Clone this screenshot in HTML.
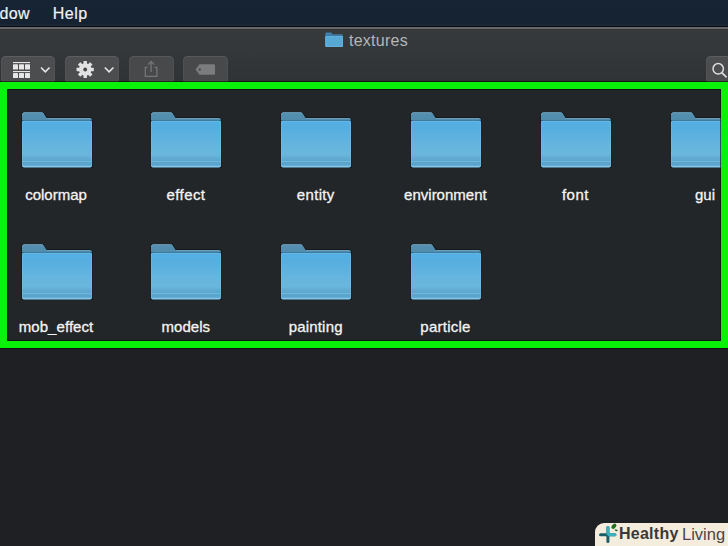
<!DOCTYPE html>
<html><head><meta charset="utf-8">
<style>
*{margin:0;padding:0;box-sizing:border-box}
html,body{width:728px;height:546px;overflow:hidden;background:#1e2023;font-family:"Liberation Sans",sans-serif}
.abs{position:absolute}
#menubar{position:absolute;left:0;top:0;width:728px;height:26px;background:linear-gradient(#172434 0,#152231 24px,#1e2937 25px,#1e2937 26px)}
#menubar span{position:absolute;top:3.7px;letter-spacing:0.45px;font-size:16px;color:#eef1f4;line-height:20px;-webkit-text-stroke:0.2px #eef1f4}
#sep1{position:absolute;left:0;top:26px;width:728px;height:1px;background:#06080c}
#sep{position:absolute;left:0;top:27px;width:728px;height:2px;background:#66696b}
#toolbar{position:absolute;left:0;top:29px;width:728px;height:53px;background:linear-gradient(#2c2e2f 0,#37393b 1.5px,#36393b 10px,#303335 52px,#29282d 53px)}
#title{position:absolute;left:349px;top:31px;letter-spacing:0.25px;font-size:16px;color:#b4b6b8;line-height:20px}
.btn{position:absolute;top:56px;height:28px;border-radius:5px;background:#4b4d4f;box-shadow:inset 0 0 0 1px rgba(255,255,255,0.04),inset 0 1px 0 #55575a}
.btn.dim{background:#47494b;box-shadow:inset 0 0 0 1px rgba(255,255,255,0.04),inset 0 1px 0 #505254}
#green{position:absolute;left:0;top:82px;width:728px;height:266px;border:7px solid #0af20a;z-index:5;box-shadow:0 0 0 1px rgba(5,10,5,0.55),inset 0 0 0 1px rgba(5,10,5,0.6)}
#content{position:absolute;left:0;top:82px;width:728px;height:266px;background:#232629}
.item{position:absolute;width:130px;height:100px}
.item svg{position:absolute;left:29.6px;top:0.5px;overflow:visible}
.item .lbl{position:absolute;left:0;width:130px;top:75px;font-size:15px;color:#f4f4f4;line-height:18px;text-align:center;-webkit-text-stroke:0.3px #f4f4f4}
#logo{position:absolute;left:595.4px;top:523px;width:140px;height:30px;background:#f4ecdc;border-radius:9px 0 0 0}
</style></head><body>
<div id="menubar">
  <span style="left:-0.6px">dow</span>
  <span style="left:52.8px">Help</span>
</div>
<div id="sep1"></div>
<div id="sep"></div>
<div id="toolbar"></div>
<svg class="abs" style="left:325px;top:32px" width="19" height="16" viewBox="0 0 19 16">
  <path d="M0.3 1.8Q0.3 0.6 1.5 0.6H6.2L7.6 2.2H16.8Q18 2.2 18 3.4V14Q18 15 17 15H1.3Q0.3 15 0.3 14Z" fill="#3f7fa8"/>
  <rect x="0.3" y="3.2" width="17.7" height="0.7" fill="#2a5575"/>
  <rect x="0.3" y="3.8" width="17.7" height="11.2" rx="1" fill="#58a8d6"/>
  <rect x="0.8" y="4.3" width="16.7" height="10.2" rx="0.8" fill="none" stroke="#7cc0e4" stroke-opacity="0.5" stroke-width="0.8"/>
</svg>
<div id="title">textures</div>
<div class="btn" style="left:1px;width:54px"></div>
<div class="btn" style="left:65px;width:54px"></div>
<div class="btn dim" style="left:129px;width:45px"></div>
<div class="btn dim" style="left:183px;width:45px"></div>
<div class="btn" style="left:706px;width:30px"></div>
<!-- grid icon -->
<svg class="abs" style="left:0;top:52px" width="728" height="34" viewBox="0 52 728 34">
  <g fill="#e6e6e6">
    <rect x="13" y="62" width="17" height="1.1"/>
    <rect x="13" y="64.3" width="5" height="5.3" rx="0.6"/>
    <rect x="19" y="64.3" width="5" height="5.3" rx="0.6"/>
    <rect x="25" y="64.3" width="5" height="5.3" rx="0.6"/>
    <rect x="13" y="71" width="17" height="1.1"/>
    <rect x="13" y="73" width="5" height="5.1" rx="0.6"/>
    <rect x="19" y="73" width="5" height="5.1" rx="0.6"/>
    <rect x="25" y="73" width="5" height="5.1" rx="0.6"/>
  </g>
  <path d="M41 67.5L45.3 71.8L49.6 67.5" fill="none" stroke="#e6e6e6" stroke-width="1.6"/>
  <path d="M104.8 67.5L109.1 71.8L113.4 67.5" fill="none" stroke="#e6e6e6" stroke-width="1.6"/>
  <g fill="#e2e2e2"><rect x="83.5" y="60.9" width="3.4" height="4" rx="0.4" transform="rotate(0 85.2 69.5)"/><rect x="83.5" y="60.9" width="3.4" height="4" rx="0.4" transform="rotate(45 85.2 69.5)"/><rect x="83.5" y="60.9" width="3.4" height="4" rx="0.4" transform="rotate(90 85.2 69.5)"/><rect x="83.5" y="60.9" width="3.4" height="4" rx="0.4" transform="rotate(135 85.2 69.5)"/><rect x="83.5" y="60.9" width="3.4" height="4" rx="0.4" transform="rotate(180 85.2 69.5)"/><rect x="83.5" y="60.9" width="3.4" height="4" rx="0.4" transform="rotate(225 85.2 69.5)"/><rect x="83.5" y="60.9" width="3.4" height="4" rx="0.4" transform="rotate(270 85.2 69.5)"/><rect x="83.5" y="60.9" width="3.4" height="4" rx="0.4" transform="rotate(315 85.2 69.5)"/><circle cx="85.2" cy="69.5" r="6.2"/></g><circle cx="85.2" cy="69.5" r="1.9" fill="#45474a"/>
  <!-- share -->
  <g fill="none" stroke="#747678" stroke-width="1.3">
    <path d="M147.5 67.3H145.3V76.4H156.9V67.3H154.5"/>
    <path d="M151.1 72V61.5M148 64.6L151.1 61.5L154.2 64.6"/>
  </g>
  <!-- tag -->
  <path d="M195.5 69.5L199.5 64.3H214Q215 64.3 215 65.3V73.7Q215 74.7 214 74.7H199.5Z" fill="#7a7c7e"/>
  <circle cx="199.8" cy="69.5" r="1.2" fill="#4a4c4e"/>
  <!-- search -->
  <circle cx="718.2" cy="68.8" r="5.2" fill="none" stroke="#dcdcdc" stroke-width="1.5"/>
  <path d="M721.8 72.6L726.6 77.4" stroke="#dcdcdc" stroke-width="1.7"/>
</svg>
<div id="green"></div>
<div id="content"></div>
<svg width="0" height="0" style="position:absolute">
<defs>
<linearGradient id="fg" x1="0" y1="0" x2="0" y2="1">
<stop offset="0" stop-color="#56b0e4"/>
<stop offset="0.15" stop-color="#55aee0"/>
<stop offset="0.55" stop-color="#66b5de"/>
<stop offset="0.72" stop-color="#6ab6dc"/>
<stop offset="0.815" stop-color="#60a9d1"/>
<stop offset="0.865" stop-color="#5ca6cf"/>
<stop offset="0.875" stop-color="#72bbe0"/>
<stop offset="0.895" stop-color="#5ba5cd"/>
<stop offset="0.955" stop-color="#5aa3cb"/>
<stop offset="0.97" stop-color="#84c6e7"/>
<stop offset="0.99" stop-color="#84c6e7"/>
<stop offset="1" stop-color="#6fb6dc"/>
</linearGradient>
<linearGradient id="tg" x1="0" y1="0" x2="0" y2="1">
<stop offset="0" stop-color="#5590b0"/>
<stop offset="1" stop-color="#4a86a6"/>
</linearGradient>
<symbol id="folder" viewBox="0 0 72 57">
<path d="M0.3 2.8Q0.3 -0.4 3.3 -0.4H20.8Q22.2 -0.4 23.1 0.7L26 5.3H69Q71.7 5.3 71.7 8V56.1H0.3Z" fill="#14171a"/>
<path d="M1 2.8Q1 0.3 3.3 0.3H20.5Q21.8 0.3 22.6 1.3L25.6 6H69Q71 6 71 8V20H1Z" fill="url(#tg)"/>
<path d="M1.4 2.8Q1.4 0.7 3.3 0.7H20.5Q21.6 0.7 22.3 1.6" fill="none" stroke="#86b6d2" stroke-width="0.7" stroke-opacity="0.8"/>
<rect x="25.8" y="6" width="43.5" height="0.8" fill="#78aac6" fill-opacity="0.8"/>
<rect x="1" y="8" width="70" height="1" fill="#2b5f7f"/>
<rect x="1" y="8.8" width="70" height="46.6" rx="2" fill="url(#fg)"/>
<rect x="1.4" y="9.2" width="69.2" height="45.8" rx="1.6" fill="none" stroke="#86c8ec" stroke-opacity="0.45" stroke-width="0.8"/>
</symbol>
</defs></svg>
<div id="items">
<div class="item" style="left:-9.0px;top:111px"><svg width="72" height="57"><use href="#folder"/></svg><div class="lbl" style="letter-spacing:0px;padding-left:0px">colormap</div></div>
<div class="item" style="left:120.8px;top:111px"><svg width="72" height="57"><use href="#folder"/></svg><div class="lbl" style="letter-spacing:0.4px;padding-left:0.4px">effect</div></div>
<div class="item" style="left:250.6px;top:111px"><svg width="72" height="57"><use href="#folder"/></svg><div class="lbl" style="letter-spacing:0.32px;padding-left:0.32px">entity</div></div>
<div class="item" style="left:380.4px;top:111px"><svg width="72" height="57"><use href="#folder"/></svg><div class="lbl" style="letter-spacing:0px;padding-left:0px">environment</div></div>
<div class="item" style="left:510.2px;top:111px"><svg width="72" height="57"><use href="#folder"/></svg><div class="lbl" style="letter-spacing:0.43px;padding-left:0.43px">font</div></div>
<div class="item" style="left:640.0px;top:111px"><svg width="72" height="57"><use href="#folder"/></svg><div class="lbl" style="letter-spacing:0.1px;padding-left:0.1px">gui</div></div>
<div class="item" style="left:-9.0px;top:243px"><svg width="72" height="57"><use href="#folder"/></svg><div class="lbl" style="letter-spacing:0.07px;padding-left:0.07px">mob_effect</div></div>
<div class="item" style="left:120.8px;top:243px"><svg width="72" height="57"><use href="#folder"/></svg><div class="lbl" style="letter-spacing:0px;padding-left:0px">models</div></div>
<div class="item" style="left:250.6px;top:243px"><svg width="72" height="57"><use href="#folder"/></svg><div class="lbl" style="letter-spacing:0.19px;padding-left:0.19px">painting</div></div>
<div class="item" style="left:380.4px;top:243px"><svg width="72" height="57"><use href="#folder"/></svg><div class="lbl" style="letter-spacing:0.24px;padding-left:0.24px">particle</div></div>
</div>
<div id="logo"></div>
<svg class="abs" style="left:595px;top:515px" width="40" height="31" viewBox="595 515 40 31">
  <rect x="606.4" y="526" width="3" height="17" rx="1.5" fill="#1b5c68"/>
  <rect x="599" y="533.2" width="17.4" height="3" rx="1.5" fill="#1b5c68"/>
  <rect x="606.4" y="526" width="3" height="9" rx="1.5" fill="#3ab3c0"/>
  <rect x="607.5" y="533.2" width="8.9" height="3" rx="1.5" fill="#3ab3c0"/>
  <ellipse cx="613.9" cy="526.3" rx="1.9" ry="3" transform="rotate(40 613.9 526.3)" fill="#217020"/>
  <ellipse cx="616.2" cy="530.2" rx="1.6" ry="0.8" transform="rotate(20 616.2 530.2)" fill="#217020"/>
</svg>
<div class="abs" style="left:619px;top:524px;font-size:16px;font-weight:bold;color:#3b3937;letter-spacing:0.25px;line-height:20px">Healthy</div>
<div class="abs" style="left:682px;top:524px;font-size:16.5px;color:#4a4642;line-height:20px">Living</div>
</body></html>
